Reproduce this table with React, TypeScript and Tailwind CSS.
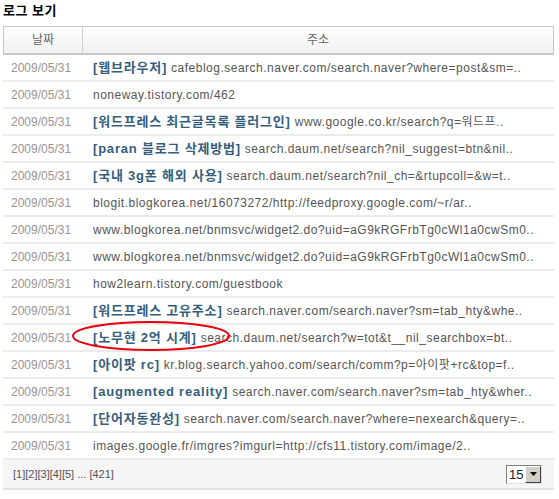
const rows: { kw?: string; url: string }[] = [
  { kw: "[웹브라우저]", url: "cafeblog.search.naver.com/search.naver?where=post&sm=.." },
  { url: "noneway.tistory.com/462" },
  { kw: "[워드프레스 최근글목록 플러그인]", url: "www.google.co.kr/search?q=워드프.." },
  { kw: "[paran 블로그 삭제방법]", url: "search.daum.net/search?nil_suggest=btn&nil.." },
  { kw: "[국내 3g폰 해외 사용]", url: "search.daum.net/search?nil_ch=&rtupcoll=&w=t.." },
  { url: "blogit.blogkorea.net/16073272/http://feedproxy.google.com/~r/ar.." },
  { url: "www.blogkorea.net/bnmsvc/widget2.do?uid=aG9kRGFrbTg0cWl1a0cwSm0.." },
  { url: "www.blogkorea.net/bnmsvc/widget2.do?uid=aG9kRGFrbTg0cWl1a0cwSm0.." },
  { url: "how2learn.tistory.com/guestbook" },
  { kw: "[워드프레스 고유주소]", url: "search.naver.com/search.naver?sm=tab_hty&whe.." },
  { kw: "[노무현 2억 시계]", url: "search.daum.net/search?w=tot&t__nil_searchbox=bt.." },
  { kw: "[아이팟 rc]", url: "kr.blog.search.yahoo.com/search/comm?p=아이팟+rc&top=f.." },
  { kw: "[augmented reality]", url: "search.naver.com/search.naver?sm=tab_hty&wher.." },
  { kw: "[단어자동완성]", url: "search.naver.com/search.naver?where=nexearch&query=.." },
  { url: "images.google.fr/imgres?imgurl=http://cfs11.tistory.com/image/2.." },
];

export default function App() {
  return (
    <div className="relative w-[559px] h-[499px] bg-white pl-[3px] font-['Liberation_Sans','Noto_Sans_CJK_KR',sans-serif]">
      <div className="h-[26px] pt-[3px] text-[13px] font-bold text-black leading-[16px] tracking-[0.5px]">
        로그 보기
      </div>

      <div className="w-[551px]">
        {/* header */}
        <div className="flex h-[29px] border border-b-2 border-[#c8c8c8] bg-gradient-to-b from-white to-[#f0f0f0] text-[12px] text-[#666]">
          <div className="w-[79px] border-r border-[#d0d0d0] flex items-center justify-center">
            날짜
          </div>
          <div className="flex-1 flex items-center justify-center">주소</div>
        </div>

        {/* rows */}
        {rows.map((r, i) => (
          <div
            key={i}
            className="flex items-center h-[27px] border-b-2 border-[#ebebeb] text-[12px] whitespace-nowrap overflow-hidden"
          >
            <div className="w-[80px] pl-[8px] shrink-0 text-[#9a9494]">
              2009/05/31
            </div>
            <div className="pl-[10px] text-[#555] overflow-hidden tracking-[0.5px]">
              {r.kw && (
                <span className="font-bold text-[13px] text-[#345e7d] mr-[4px] tracking-[0.8px]">
                  {r.kw}
                </span>
              )}
              {r.url}
            </div>
          </div>
        ))}

        {/* footer */}
        <div className="flex items-center justify-between h-[30px] bg-[#f5f5f5] border-b-2 border-[#e3e3e3] pl-[10px] pr-[12px]">
          <div className="text-[11px] text-[#555]">
            [1][2][3][4][5] ... [421]
          </div>
          <div className="flex h-[19px] w-[36px] border border-t-[#808080] border-l-[#808080] border-r-[#e0e0e0] border-b-[#e0e0e0] bg-white">
            <div className="flex-1 text-[13px] leading-[17px] pl-[2px] text-[#222]">15</div>
            <div className="w-[16px] flex items-center justify-center bg-[#d4d0c8] border border-t-white border-l-white border-r-[#404040] border-b-[#404040]">
              <svg width="7" height="4" viewBox="0 0 7 4">
                <path d="M0 0h7L3.5 4z" fill="#000" />
              </svg>
            </div>
          </div>
        </div>
      </div>

      {/* red highlight ellipse */}
      <svg className="absolute left-[70px] top-[320px]" width="162" height="32" viewBox="0 0 162 32">
        <ellipse cx="81" cy="16" rx="78" ry="14" fill="none" stroke="#e8000d" strokeWidth="2" />
      </svg>
    </div>
  );
}
